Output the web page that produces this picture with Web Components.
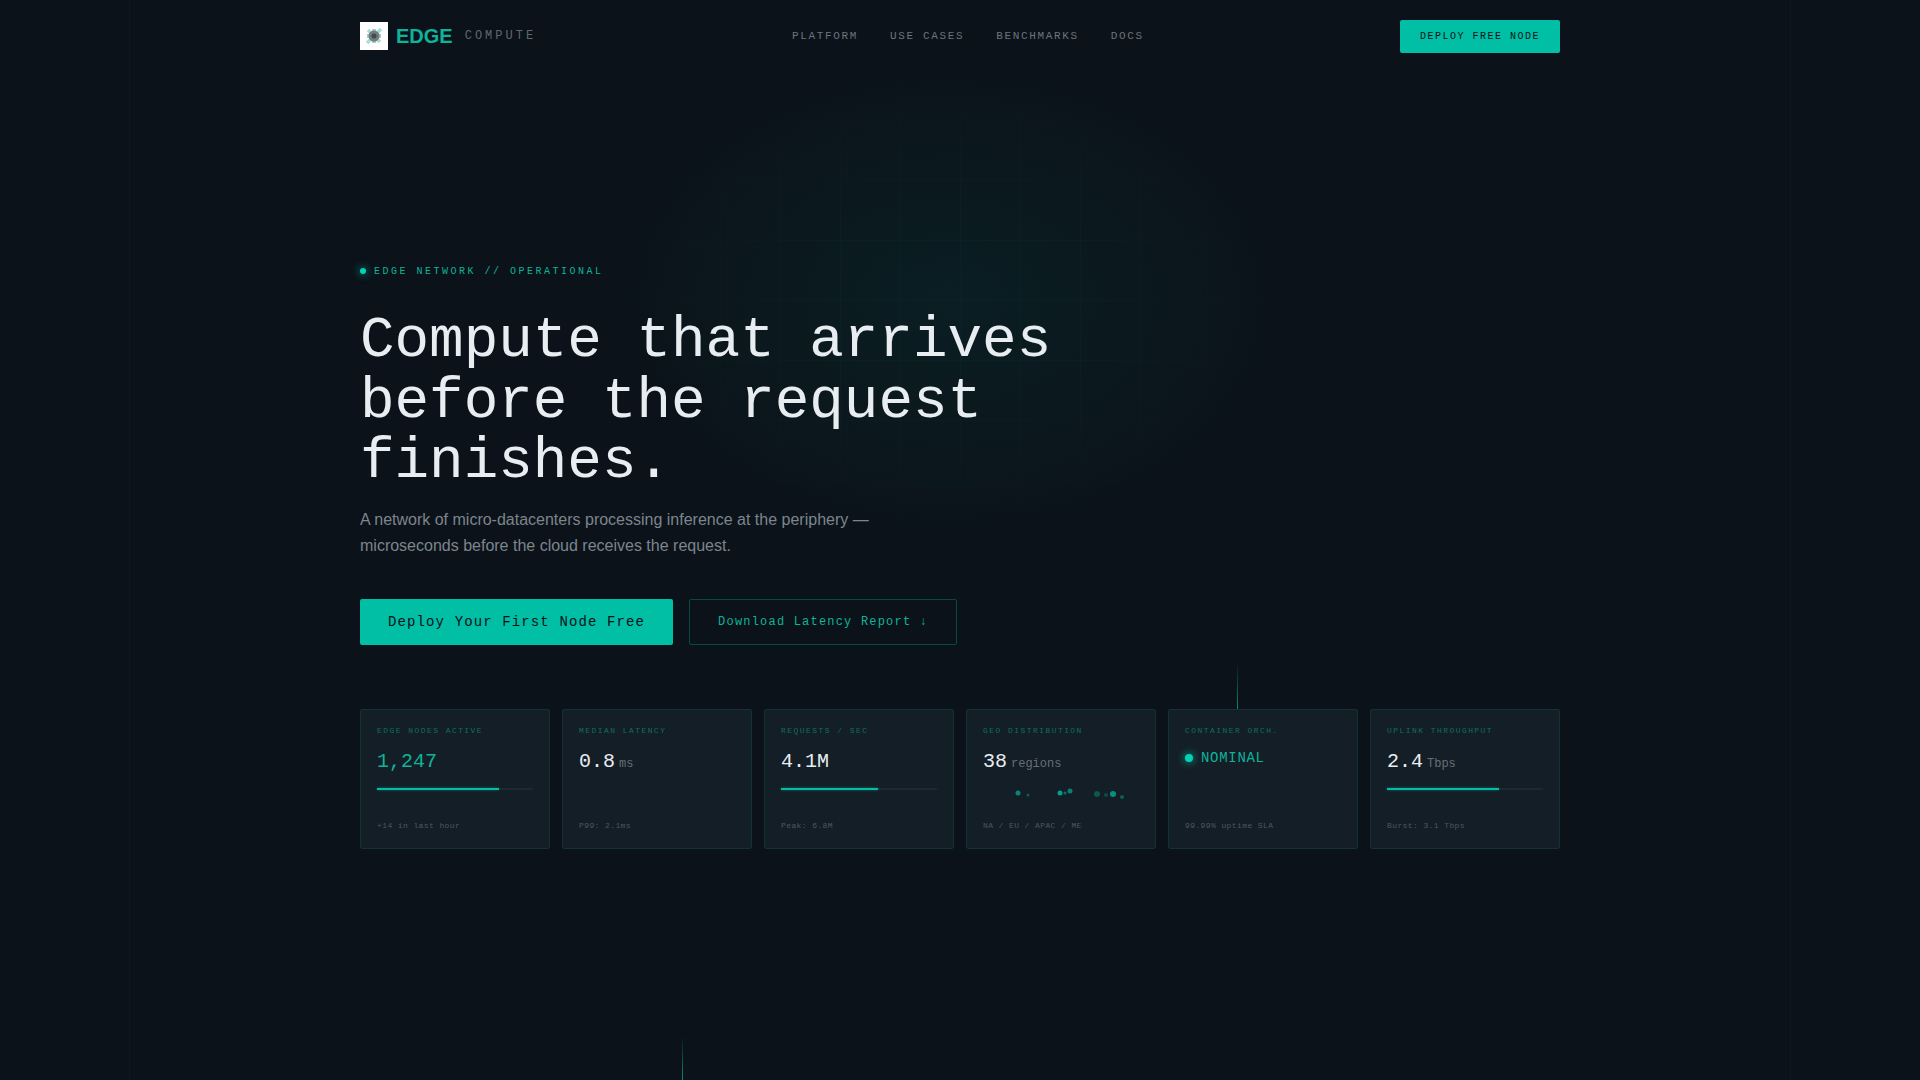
<!DOCTYPE html>
<html lang="en">
<head>
<meta charset="utf-8">
<title>Edge Compute</title>
<style>
  html, body { margin: 0; padding: 0; background: #0b1219; }
  body { font-family: "Liberation Mono", monospace; color: #e8edf2; }
</style>
</head>
<body>
<edge-page>
  <site-nav></site-nav>
  <hero-block>
    <span slot="eyebrow">EDGE NETWORK // OPERATIONAL</span>
    <span slot="title">Compute that arrives<br>before the request<br>finishes.</span>
    <span slot="lede">A network of micro-datacenters processing inference at the periphery —<br>microseconds before the cloud receives the request.</span>
    <edge-button slot="actions" kind="primary">Deploy Your First Node Free</edge-button>
    <edge-button slot="actions" kind="ghost">Download Latency Report ↓</edge-button>
  </hero-block>
  <stat-row>
    <stat-card label="EDGE NODES ACTIVE" value="1,247" accent bar="78" foot="+14 in last hour"></stat-card>
    <stat-card label="MEDIAN LATENCY" value="0.8" unit="ms" foot="P99: 2.1ms"></stat-card>
    <stat-card label="REQUESTS / SEC" value="4.1M" bar="62" foot="Peak: 6.8M"></stat-card>
    <stat-card label="GEO DISTRIBUTION" value="38" unit="regions" foot="NA / EU / APAC / ME"><geo-map></geo-map></stat-card>
    <stat-card label="CONTAINER ORCH." status="NOMINAL" foot="99.99% uptime SLA"></stat-card>
    <stat-card label="UPLINK THROUGHPUT" value="2.4" unit="Tbps" bar="72" foot="Burst: 3.1 Tbps"></stat-card>
  </stat-row>
</edge-page>

<script>
class EdgePage extends HTMLElement {
  connectedCallback() {
    this.attachShadow({ mode: 'open' });
    this.shadowRoot.innerHTML = `
      <style>
        :host {
          display: block;
          position: relative;
          height: 1080px;
          overflow: hidden;
          background: #0b1219;
        }
        .glow {
          position: absolute;
          left: 610px;
          top: 60px;
          width: 680px;
          height: 480px;
          background: radial-gradient(ellipse at center, rgba(0, 191, 165, 0.07) 0%, rgba(0, 191, 165, 0.032) 45%, rgba(0, 191, 165, 0) 70%);
        }
        .grid {
          position: absolute;
          inset: 0;
          background-image:
            linear-gradient(rgba(0, 191, 165, 0.03) 1px, transparent 1px),
            linear-gradient(90deg, rgba(0, 191, 165, 0.03) 1px, transparent 1px);
          background-size: 60px 60px;
          -webkit-mask-image: radial-gradient(ellipse 420px 300px at 950px 300px, #000 35%, transparent 100%);
          mask-image: radial-gradient(ellipse 420px 300px at 950px 300px, #000 35%, transparent 100%);
        }
        .rail {
          position: absolute;
          top: 0;
          bottom: 0;
          width: 1px;
          background: rgba(255, 255, 255, 0.025);
        }
        .packet {
          position: absolute;
          width: 1px;
          background: linear-gradient(to bottom, rgba(0, 191, 165, 0), rgba(0, 191, 165, 0.7));
        }
        .content {
          position: relative;
          width: 1200px;
          margin: 0 auto;
        }
      </style>
      <div class="grid"></div>
      <div class="glow"></div>
      <div class="rail" style="left:129px"></div>
      <div class="rail" style="left:1790px"></div>
      <div class="packet" style="left:1237px;top:662px;height:47px"></div>
      <div class="packet" style="left:682px;top:1035px;height:45px"></div>
      <div class="content"><slot></slot></div>
    `;
  }
}

class SiteNav extends HTMLElement {
  connectedCallback() {
    this.attachShadow({ mode: 'open' });
    this.shadowRoot.innerHTML = `
      <style>
        :host {
          display: flex;
          align-items: center;
          height: 72px;
        }
        .brand {
          display: flex;
          align-items: center;
          width: 432px;
        }
        .brand svg { display: block; }
        .edge {
          margin-left: 8px;
          font: bold 20px "Liberation Sans", sans-serif;
          color: #0fb39b;
        }
        .compute {
          margin-left: 12px;
          font-size: 12px;
          letter-spacing: 0.25em;
          color: #5f6871;
        }
        nav {
          display: flex;
          gap: 32px;
          font-size: 11px;
          letter-spacing: 0.15em;
          color: #6b747c;
        }
        .cta {
          margin-left: auto;
          padding: 11px 20px;
          border-radius: 2px;
          background: #00bfa5;
          color: #0a1118;
          font-size: 10px;
          line-height: 11px;
          letter-spacing: 0.15em;
        }
      </style>
      <div class="brand">
        <svg width="28" height="28" viewBox="0 0 28 28">
          <defs><filter id="soft"><feGaussianBlur stdDeviation="0.7"/></filter></defs>
          <rect width="28" height="28" fill="#fff"/>
          <g filter="url(#soft)">
            <path d="M7 21 L21 7 M8 8 L20 20" stroke="#a8dfd5" stroke-width="3.5"/>
            <path d="M14 7 V21 M7 14 H21" stroke="#b9c4c4" stroke-width="4"/>
            <circle cx="14" cy="14" r="5.5" fill="#6f7b7d"/>
            <circle cx="14" cy="14" r="2.5" fill="#414d50"/>
          </g>
        </svg>
        <span class="edge">EDGE</span>
        <span class="compute">COMPUTE</span>
      </div>
      <nav>
        <span>PLATFORM</span>
        <span>USE CASES</span>
        <span>BENCHMARKS</span>
        <span>DOCS</span>
      </nav>
      <span class="cta">DEPLOY FREE NODE</span>
    `;
  }
}

class HeroBlock extends HTMLElement {
  connectedCallback() {
    this.attachShadow({ mode: 'open' });
    this.shadowRoot.innerHTML = `
      <style>
        :host {
          display: block;
          padding-top: 193px;
        }
        .eyebrow {
          display: flex;
          align-items: center;
          gap: 8px;
          height: 12px;
          font-size: 10px;
          letter-spacing: 0.25em;
          color: #0fb39b;
        }
        .dot {
          width: 6px;
          height: 6px;
          border-radius: 50%;
          background: #00d4b5;
          box-shadow: 0 0 8px #00bfa5;
        }
        h1 {
          margin: 34px 0 0;
          font-weight: 400;
          font-size: 57.6px;
          line-height: 60.5px;
          color: #e8edf2;
        }
        p {
          margin: 14.5px 0 0;
          font: 16px/26.4px "Liberation Sans", sans-serif;
          color: #7d858d;
        }
        .actions {
          display: flex;
          gap: 16px;
          margin-top: 39px;
        }
      </style>
      <div class="eyebrow"><span class="dot"></span><slot name="eyebrow"></slot></div>
      <h1><slot name="title"></slot></h1>
      <p><slot name="lede"></slot></p>
      <div class="actions"><slot name="actions"></slot></div>
    `;
  }
}

class EdgeButton extends HTMLElement {
  connectedCallback() {
    this.attachShadow({ mode: 'open' });
    this.shadowRoot.innerHTML = `
      <style>
        :host {
          display: flex;
          align-items: center;
          box-sizing: border-box;
          height: 46px;
          padding: 0 28px;
          border-radius: 2px;
        }
        :host([kind="primary"]) {
          background: #00bfa5;
          color: #0a1118;
          font-size: 14px;
          letter-spacing: 0.08em;
        }
        :host([kind="ghost"]) {
          border: 1px solid rgba(0, 191, 165, 0.32);
          color: #0fb39b;
          font-size: 12px;
          letter-spacing: 0.1em;
        }
      </style>
      <slot></slot>
    `;
  }
}

class StatRow extends HTMLElement {
  connectedCallback() {
    this.attachShadow({ mode: 'open' });
    this.shadowRoot.innerHTML = `
      <style>
        :host {
          display: grid;
          grid-template-columns: repeat(6, 1fr);
          gap: 12px;
          margin-top: 64px;
        }
      </style>
      <slot></slot>
    `;
  }
}

class StatCard extends HTMLElement {
  connectedCallback() {
    const value = this.getAttribute('value');
    const unit = this.getAttribute('unit');
    const bar = this.getAttribute('bar');
    const status = this.getAttribute('status');

    let head = '';
    if (status) {
      head = `<div class="status"><span class="led"></span>${status}</div>`;
    } else {
      head = `<div class="value ${this.hasAttribute('accent') ? 'accent' : ''}">${value}${unit ? `<span class="unit">${unit}</span>` : ''}</div>`;
    }

    this.attachShadow({ mode: 'open' });
    this.shadowRoot.innerHTML = `
      <style>
        :host {
          display: flex;
          flex-direction: column;
          box-sizing: border-box;
          height: 140px;
          padding: 16px 16px 18px;
          background: #141e26;
          border: 1px solid rgba(0, 191, 165, 0.13);
          border-radius: 3px;
        }
        .label {
          font-size: 8px;
          line-height: 9px;
          letter-spacing: 0.18em;
          color: #0e6e62;
        }
        .value, .status {
          margin-top: 15px;
          height: 23px;
          line-height: 23px;
          font-size: 20px;
          color: #e8edf2;
          white-space: nowrap;
        }
        .value.accent { color: #0fb39b; }
        .unit {
          margin-left: 4px;
          font-size: 12px;
          color: #666f77;
        }
        .status {
          display: flex;
          align-items: center;
          gap: 8px;
          margin-top: 12px;
          font-size: 14px;
          letter-spacing: 0.05em;
          color: #0fb39b;
        }
        .led {
          width: 8px;
          height: 8px;
          border-radius: 50%;
          background: #00d4b5;
          box-shadow: 0 0 8px #00bfa5;
        }
        .track {
          height: 2px;
          margin-top: 15px;
          background: rgba(255, 255, 255, 0.05);
        }
        .fill {
          height: 100%;
          background: #00bfa5;
          box-shadow: 0 0 3px rgba(0, 191, 165, 0.5);
        }
        .foot {
          margin-top: auto;
          font-size: 8px;
          line-height: 9px;
          letter-spacing: 0.05em;
          color: #4e575f;
        }
      </style>
      <div class="label">${this.getAttribute('label')}</div>
      ${head}
      ${bar ? `<div class="track"><div class="fill" style="width:${bar}%"></div></div>` : ''}
      <slot></slot>
      <div class="foot">${this.getAttribute('foot')}</div>
    `;
  }
}

class GeoMap extends HTMLElement {
  connectedCallback() {
    // region dots: x, y, radius, opacity
    const dots = [
      [35, 10, 2.5, 0.65], [45, 12, 1.5, 0.4],
      [77, 10, 2.5, 0.8], [82, 10, 1.5, 0.5], [87, 8, 2.5, 0.6],
      [114, 11, 3, 0.35], [123, 12, 2, 0.28], [130, 11, 3, 0.7], [139, 14, 2, 0.4]
    ];
    this.attachShadow({ mode: 'open' });
    this.shadowRoot.innerHTML = `
      <style>
        :host {
          display: block;
          height: 24px;
          margin-top: 10px;
        }
        svg { display: block; }
      </style>
      <svg width="156" height="24" viewBox="0 0 156 24">
        ${dots.map(d => `<circle cx="${d[0]}" cy="${d[1]}" r="${d[2]}" fill="#00bfa5" opacity="${d[3]}"/>`).join('')}
      </svg>
    `;
  }
}

customElements.define('edge-page', EdgePage);
customElements.define('site-nav', SiteNav);
customElements.define('hero-block', HeroBlock);
customElements.define('edge-button', EdgeButton);
customElements.define('stat-row', StatRow);
customElements.define('stat-card', StatCard);
customElements.define('geo-map', GeoMap);
</script>
</body>
</html>
